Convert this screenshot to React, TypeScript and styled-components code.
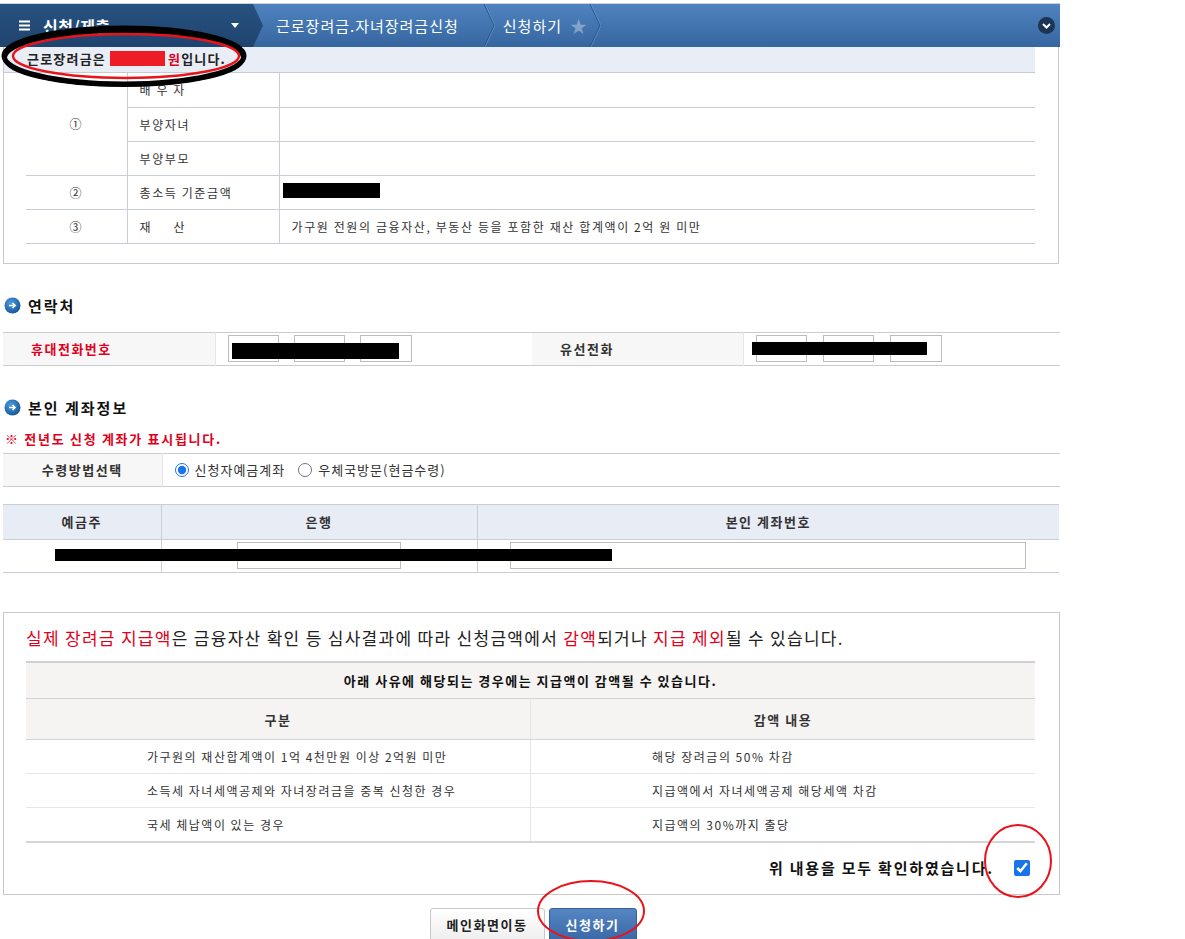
import * as React from "react";
import styled, { createGlobalStyle } from "styled-components";

const GlobalStyle = createGlobalStyle`
  html, body {
    margin: 0;
    padding: 0;
    background: #fff;
  }
  body {
    font-family: "Noto Sans CJK KR", "Noto Sans", sans-serif;
    font-size: 12px;
    color: #333;
  }
  * {
    box-sizing: border-box;
  }
`;

const RED = "#e0001b";

/* ---------- top navigation bar ---------- */

function MenuIcon() {
  return (
    <svg width="11" height="11" viewBox="0 0 11 11">
      <rect x="0" y="0.5" width="11" height="2" fill="#fff" />
      <rect x="0" y="4.5" width="11" height="2" fill="#fff" />
      <rect x="0" y="8.5" width="11" height="2" fill="#fff" />
    </svg>
  );
}

function CrumbDivider() {
  return (
    <svg width="12" height="43" viewBox="0 0 12 43">
      <polyline points="1,0 11,21.5 1,43" fill="none" stroke="#2a5688" strokeWidth="1" />
      <polyline points="2,0 12,21.5 2,43" fill="none" stroke="#6d9ad0" strokeWidth="1" opacity="0.6" />
    </svg>
  );
}

function RoundChevron() {
  return (
    <svg width="17" height="17" viewBox="0 0 17 17">
      <circle cx="8.5" cy="8.5" r="8.5" fill="#1c3555" />
      <polyline points="5,7 8.5,10.5 12,7" fill="none" stroke="#fff" strokeWidth="2" />
    </svg>
  );
}

function SectionBullet() {
  return (
    <svg width="17" height="17" viewBox="0 0 17 17">
      <defs>
        <radialGradient id="bullet" cx="40%" cy="35%" r="70%">
          <stop offset="0" stopColor="#4d9be0" />
          <stop offset="1" stopColor="#145596" />
        </radialGradient>
      </defs>
      <circle cx="8.5" cy="8.5" r="8" fill="url(#bullet)" />
      <path d="M5 8.5h6M8.5 6l2.6 2.5-2.6 2.5" fill="none" stroke="#fff" strokeWidth="1.6" />
    </svg>
  );
}

const TopBar = styled.div`
  margin-top: 3px;
  height: 44px;
  border-top: 1px solid #cfd3d8;
  display: flex;
  align-items: stretch;
  background: linear-gradient(#4f83bf, #3666a0);
`;

const MenuTitle = styled.div`
  width: 263px;
  flex-shrink: 0;
  display: flex;
  align-items: center;
  gap: 13px;
  padding-left: 19px;
  background: linear-gradient(#28527f, #1f436f);
  clip-path: polygon(0 0, 253px 0, 263px 50%, 253px 100%, 0 100%);
  color: #fff;
  font-size: 16px;
  font-weight: bold;
  letter-spacing: 0.5px;
`;

const Caret = styled.span`
  margin-left: auto;
  margin-right: 24px;
  width: 0;
  height: 0;
  border-left: 4px solid transparent;
  border-right: 4px solid transparent;
  border-top: 5px solid #fff;
`;

const Crumb = styled.div<{ $lead: number; $trail: number }>`
  display: flex;
  align-items: center;
  padding-left: ${(p) => p.$lead}px;
  color: #fff;
  font-size: 15px;
  letter-spacing: 1px;

  > svg {
    margin-left: ${(p) => p.$trail}px;
  }
`;

const Star = styled.span`
  margin-left: 8px;
  font-size: 17px;
  color: rgba(255, 255, 255, 0.35);
`;

const BarEnd = styled.div`
  margin-left: auto;
  margin-right: 5px;
  display: flex;
  align-items: center;
`;

/* ---------- income summary ---------- */

const SummaryBox = styled.div`
  margin-left: 3px;
  width: 1056px;
  border: 1px solid #c9c9c9;
  border-top: none;
  padding-bottom: 19px;
`;

const AmountStrip = styled.div`
  height: 26px;
  margin-right: 23px;
  padding: 0 0 2px 23px;
  display: flex;
  align-items: center;
  background: #e8edf6;
  border-bottom: 1px solid #c5cad3;
  font-size: 13px;
  font-weight: bold;
  letter-spacing: 1.2px;
  color: #222;
`;

const Redact = styled.span<{ $w: number; $h: number; $color?: string }>`
  display: inline-block;
  width: ${(p) => p.$w}px;
  height: ${(p) => p.$h}px;
  background: ${(p) => p.$color ?? "#000"};
`;

const RedText = styled.span`
  color: ${RED};
`;

const InfoTable = styled.table`
  margin-left: 22px;
  width: 1009px;
  border-collapse: collapse;
  table-layout: fixed;

  td {
    height: 34px;
    border-bottom: 1px solid #c8cdd6;
    font-size: 12px;
    letter-spacing: 1.6px;
    color: #333;
    padding: 0 12px;
    white-space: nowrap;
  }
`;

const NumCell = styled.td`
  text-align: center;
  border-right: 1px solid #c8cdd6;
`;

const LabelCell = styled.td`
  border-right: 1px solid #c8cdd6;
`;

/* ---------- section headings ---------- */

const SectionHeading = styled.h3<{ $top: number }>`
  margin: ${(p) => p.$top}px 0 0 4px;
  height: 20px;
  display: flex;
  align-items: center;
  gap: 7px;
  font-size: 15px;
  font-weight: bold;
  letter-spacing: 2px;
  color: #111;
`;

const Note = styled.p`
  margin: 14px 0 0 5px;
  font-size: 13px;
  line-height: 14px;
  font-weight: bold;
  letter-spacing: 1.7px;
  color: ${RED};
`;

/* ---------- contact / account tables ---------- */

const FormTable = styled.table<{ $top: number; $width: number }>`
  margin: ${(p) => p.$top}px 0 0 3px;
  width: ${(p) => p.$width}px;
  border-collapse: collapse;
  table-layout: fixed;
  border-top: 1px solid #cccccc;
  border-bottom: 1px solid #cccccc;
`;

const FieldHead = styled.th<{ $align?: string; $color?: string }>`
  height: 33px;
  padding: 0 0 0 ${(p) => (p.$align === "center" ? 0 : 28)}px;
  background: #f7f7f7;
  border-right: 1px solid #e6e6e6;
  text-align: ${(p) => p.$align ?? "left"};
  font-size: 13px;
  font-weight: bold;
  letter-spacing: 1.5px;
  color: ${(p) => p.$color ?? "#333"};
`;

const FieldCell = styled.td`
  position: relative;
  padding: 0 0 0 12px;
`;

const InputRow = styled.div<{ $gap: number }>`
  display: flex;
  gap: ${(p) => p.$gap}px;
`;

const TextInput = styled.input<{ $w: number }>`
  width: ${(p) => p.$w}px;
  height: 27px;
  border: 1px solid #bdbdbd;
  background: #fff;
  padding: 0;
  font: inherit;
`;

const OverRedact = styled.span<{ $l: number; $t: number; $w: number; $h: number }>`
  position: absolute;
  left: ${(p) => p.$l}px;
  top: ${(p) => p.$t}px;
  width: ${(p) => p.$w}px;
  height: ${(p) => p.$h}px;
  background: #000;
`;

const RadioGroup = styled.div`
  display: flex;
  align-items: center;
  font-size: 13px;
  letter-spacing: 1px;
  color: #333;

  label {
    display: flex;
    align-items: center;
    gap: 6px;
    margin-right: 13px;
  }
  input {
    margin: 0;
    width: 14px;
    height: 14px;
    accent-color: #1a73e8;
  }
`;

const AccountWrap = styled.div`
  position: relative;
  margin-top: 17px;
`;

const AccountTable = styled.table`
  margin-left: 3px;
  width: 1056px;
  border-collapse: collapse;
  table-layout: fixed;
  border-top: 1px solid #c8cdd6;
  border-bottom: 1px solid #c8cdd6;

  th {
    height: 35px;
    background: #e8ecf5;
    border-bottom: 1px solid #c8cdd6;
    border-right: 1px solid #c8cdd6;
    font-size: 13px;
    font-weight: bold;
    letter-spacing: 1.5px;
    color: #333;
  }
  th:last-child,
  td:last-child {
    border-right: none;
  }
  td {
    height: 33px;
    border-right: 1px solid #c8cdd6;
    text-align: center;
  }
  td input {
    vertical-align: middle;
  }
`;

/* ---------- notice box ---------- */

const NoticeBox = styled.div`
  margin: 39px 0 0 3px;
  width: 1057px;
  border: 1px solid #c9c9c9;
  padding: 13px 0 16px;
`;

const NoticeTitle = styled.p`
  margin: 0 0 0 22px;
  font-size: 17px;
  line-height: 24px;
  letter-spacing: 1.3px;
  color: #222;

  b {
    font-weight: normal;
    color: ${RED};
  }
`;

const ReductionTable = styled.table`
  margin: 11px 0 0 22px;
  width: 1009px;
  border-collapse: collapse;
  table-layout: fixed;
  border-top: 2px solid #cfcfcf;
  border-bottom: 2px solid #d6d6d6;
`;

const CaptionCell = styled.td`
  height: 37px;
  background: #f5f4f2;
  border-bottom: 1px solid #d3d3d3;
  text-align: center;
  font-size: 13px;
  font-weight: bold;
  letter-spacing: 1.5px;
  color: #111;
`;

const HeadCell = styled.th`
  height: 41px;
  background: #f5f4f2;
  border-bottom: 1px solid #d6d6d6;
  border-right: 1px solid #e6e6e6;
  font-size: 13px;
  font-weight: bold;
  letter-spacing: 1.5px;
  color: #333;

  &:last-child {
    border-right: none;
  }
`;

const BodyCell = styled.td`
  height: 34px;
  padding-left: 121px;
  border-bottom: 1px solid #e6e6e6;
  border-right: 1px solid #e6e6e6;
  font-size: 12px;
  letter-spacing: 1.5px;
  color: #333;
  white-space: nowrap;

  &:last-child {
    border-right: none;
  }
`;

const ConfirmRow = styled.label`
  margin: 15px 29px 0 0;
  height: 20px;
  display: flex;
  justify-content: flex-end;
  align-items: center;
  gap: 20px;
  font-size: 15px;
  font-weight: bold;
  letter-spacing: 1.8px;
  color: #111;

  input {
    margin: 0;
    width: 16px;
    height: 16px;
    accent-color: #1a73e8;
  }
`;

/* ---------- buttons ---------- */

const ButtonRow = styled.div`
  margin-top: 13px;
  padding-left: 6px;
  display: flex;
  justify-content: center;
  gap: 4px;
`;

const Button = styled.button<{ $primary?: boolean; $w: number }>`
  width: ${(p) => p.$w}px;
  height: 34px;
  border: 1px solid ${(p) => (p.$primary ? "#34619b" : "#c8c8c8")};
  border-radius: 3px;
  background: ${(p) =>
    p.$primary ? "linear-gradient(#5585c3, #3a68a6)" : "linear-gradient(#ffffff, #eeeeee)"};
  color: ${(p) => (p.$primary ? "#fff" : "#222")};
  font-family: inherit;
  font-size: 13px;
  font-weight: bold;
  letter-spacing: 1.5px;
  cursor: pointer;
`;

/* ---------- page ---------- */

const Page = styled.div`
  position: relative;
  width: 1185px;
  height: 939px;
  overflow: hidden;
`;

const Content = styled.div`
  width: 1060px;
`;

const Annotations = styled.svg`
  position: absolute;
  left: 0;
  top: 0;
  pointer-events: none;
`;

const reductions = [
  ["가구원의 재산합계액이 1억 4천만원 이상 2억원 미만", "해당 장려금의 50% 차감"],
  ["소득세 자녀세액공제와 자녀장려금을 중복 신청한 경우", "지급액에서 자녀세액공제 해당세액 차감"],
  ["국세 체납액이 있는 경우", "지급액의 30%까지 출당"],
];

export default function App() {
  return (
    <Page>
      <GlobalStyle />
      <Content>
        <TopBar>
          <MenuTitle>
            <MenuIcon />
            <span>신청/제출</span>
            <Caret />
          </MenuTitle>
          <Crumb $lead={13} $trail={24}>
            근로장려금.자녀장려금신청
            <CrumbDivider />
          </Crumb>
          <Crumb $lead={8} $trail={1}>
            신청하기
            <Star>★</Star>
            <CrumbDivider />
          </Crumb>
          <BarEnd>
            <RoundChevron />
          </BarEnd>
        </TopBar>

        <SummaryBox>
          <AmountStrip>
            근로장려금은
            <Redact $w={55} $h={15} $color="#ee1c25" style={{ margin: "0 3px 0 4px" }} />
            <RedText>원</RedText>입니다.
          </AmountStrip>
          <InfoTable>
            <colgroup>
              <col style={{ width: 101 }} />
              <col style={{ width: 152 }} />
              <col />
            </colgroup>
            <tbody>
              <tr>
                <NumCell rowSpan={3}>①</NumCell>
                <LabelCell>배 우 자</LabelCell>
                <td />
              </tr>
              <tr>
                <LabelCell>부양자녀</LabelCell>
                <td />
              </tr>
              <tr>
                <LabelCell>부양부모</LabelCell>
                <td />
              </tr>
              <tr>
                <NumCell>②</NumCell>
                <LabelCell>총소득 기준금액</LabelCell>
                <td style={{ paddingLeft: 3 }}>
                  <Redact $w={97} $h={15} />
                </td>
              </tr>
              <tr>
                <NumCell>③</NumCell>
                <LabelCell>재&nbsp;&nbsp;&nbsp;&nbsp;&nbsp;산</LabelCell>
                <td>가구원 전원의 금융자산, 부동산 등을 포함한 재산 합계액이 2억 원 미만</td>
              </tr>
            </tbody>
          </InfoTable>
        </SummaryBox>

        <SectionHeading $top={32}>
          <SectionBullet />
          연락처
        </SectionHeading>
        <FormTable $top={16} $width={1057}>
          <colgroup>
            <col style={{ width: 212 }} />
            <col style={{ width: 317 }} />
            <col style={{ width: 211 }} />
            <col />
          </colgroup>
          <tbody>
            <tr>
              <FieldHead $color={RED}>휴대전화번호</FieldHead>
              <FieldCell>
                <InputRow $gap={15}>
                  <TextInput $w={51} readOnly />
                  <TextInput $w={51} readOnly />
                  <TextInput $w={52} readOnly />
                </InputRow>
                <OverRedact $l={16} $t={10} $w={167} $h={16} />
              </FieldCell>
              <FieldHead>유선전화</FieldHead>
              <FieldCell>
                <InputRow $gap={16}>
                  <TextInput $w={51} readOnly />
                  <TextInput $w={51} readOnly />
                  <TextInput $w={52} readOnly />
                </InputRow>
                <OverRedact $l={8} $t={9} $w={175} $h={13} />
              </FieldCell>
            </tr>
          </tbody>
        </FormTable>

        <SectionHeading $top={32}>
          <SectionBullet />
          본인 계좌정보
        </SectionHeading>
        <Note>※ 전년도 신청 계좌가 표시됩니다.</Note>
        <FormTable $top={7} $width={1057}>
          <colgroup>
            <col style={{ width: 159 }} />
            <col />
          </colgroup>
          <tbody>
            <tr>
              <FieldHead $align="center">수령방법선택</FieldHead>
              <FieldCell>
                <RadioGroup>
                  <label>
                    <input type="radio" name="method" defaultChecked />
                    신청자예금계좌
                  </label>
                  <label>
                    <input type="radio" name="method" />
                    우체국방문(현금수령)
                  </label>
                </RadioGroup>
              </FieldCell>
            </tr>
          </tbody>
        </FormTable>

        <AccountWrap>
          <AccountTable>
            <colgroup>
              <col style={{ width: 158 }} />
              <col style={{ width: 316 }} />
              <col />
            </colgroup>
            <thead>
              <tr>
                <th>예금주</th>
                <th>은행</th>
                <th>본인 계좌번호</th>
              </tr>
            </thead>
            <tbody>
              <tr>
                <td />
                <td>
                  <TextInput $w={164} readOnly />
                </td>
                <td>
                  <TextInput $w={516} readOnly />
                </td>
              </tr>
            </tbody>
          </AccountTable>
          <OverRedact $l={55} $t={45} $w={557} $h={12} />
        </AccountWrap>

        <NoticeBox>
          <NoticeTitle>
            <b>실제 장려금 지급액</b>은 금융자산 확인 등 심사결과에 따라 신청금액에서 <b>감액</b>되거나{" "}
            <b>지급 제외</b>될 수 있습니다.
          </NoticeTitle>
          <ReductionTable>
            <tbody>
              <tr>
                <CaptionCell colSpan={2}>아래 사유에 해당되는 경우에는 지급액이 감액될 수 있습니다.</CaptionCell>
              </tr>
              <tr>
                <HeadCell>구분</HeadCell>
                <HeadCell>감액 내용</HeadCell>
              </tr>
              {reductions.map(([reason, effect]) => (
                <tr key={reason}>
                  <BodyCell>{reason}</BodyCell>
                  <BodyCell>{effect}</BodyCell>
                </tr>
              ))}
            </tbody>
          </ReductionTable>
          <ConfirmRow>
            위 내용을 모두 확인하였습니다.
            <input type="checkbox" defaultChecked />
          </ConfirmRow>
        </NoticeBox>

        <ButtonRow>
          <Button $w={115}>메인화면이동</Button>
          <Button $w={88} $primary>
            신청하기
          </Button>
        </ButtonRow>
      </Content>

      {/* hand-drawn highlight marks laid over the page */}
      <Annotations width="1185" height="939" viewBox="0 0 1185 939">
        <ellipse cx="124" cy="56" rx="120" ry="28" fill="none" stroke="#000" strokeWidth="5" />
        <ellipse cx="124" cy="58" rx="119" ry="27" fill="none" stroke="#000" strokeWidth="4" />
        <ellipse cx="126" cy="56" rx="113" ry="22" fill="none" stroke="#e8141c" strokeWidth="2.5" />
        <ellipse cx="1018" cy="861" rx="33" ry="36" fill="none" stroke="#e8141c" strokeWidth="2" />
        <ellipse cx="591" cy="911" rx="53" ry="30" fill="none" stroke="#e8141c" strokeWidth="2" />
      </Annotations>
    </Page>
  );
}
